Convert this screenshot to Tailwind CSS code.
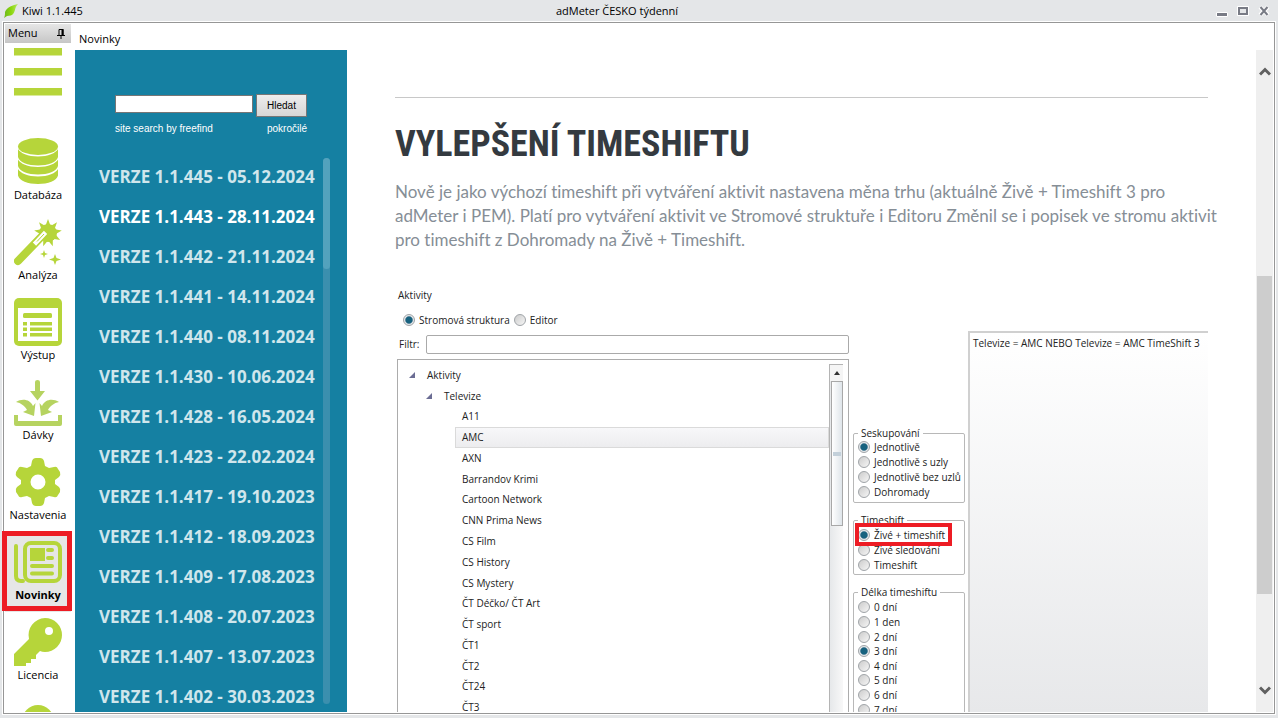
<!DOCTYPE html>
<html lang="cs">
<head>
<meta charset="utf-8">
<title>Kiwi 1.1.445</title>
<script src="https://cdn.jsdelivr.net/npm/@tailwindcss/browser@4"></script>
</head>
<body class="h-screen overflow-hidden bg-[#e4e6e8] text-black font-['Open_Sans',sans-serif] text-[11px] flex flex-col px-[3px] pb-1">
  <header class="h-[22px] shrink-0 grid grid-cols-[1fr_auto_1fr] items-center px-px">
    <div class="flex items-center gap-1">
      <svg class="w-3.5 h-4" viewBox="0 0 14 16"><defs><linearGradient id="leaf" x1="0" x2="1"><stop offset="0" stop-color="#6cb81e"/><stop offset=".5" stop-color="#8ad60c"/><stop offset="1" stop-color="#b4e860"/></linearGradient></defs><path d="M14 1C9 2 3 4 1 9c0 2 0 4-1 6l3-2c6 0 7-3 8-6 .4-2 1-4 3-6Z" fill="url(#leaf)"/></svg>
      <span>Kiwi 1.1.445</span>
    </div>
    <h1 class="pr-11">adMeter ČESKO týdenní</h1>
    <div class="flex justify-end items-center gap-[9px] pr-1">
      <button aria-label="Minimalizovat" class="w-3 h-3"><svg viewBox="0 0 12 12"><path d="M.5 7.5h11v4H.5z" fill="#787b85" stroke="#fff"/></svg></button>
      <button aria-label="Maximalizovat" class="w-3 h-3"><svg viewBox="0 0 12 12"><path d="M.5 1.500h11v9H.5z" fill="#fff" stroke="#fff"/><path d="M2 3h8v6H2z" fill="#e4e6e8" stroke="#787b85" stroke-width="2"/></svg></button>
      <button aria-label="Zavřít" class="w-3 h-3"><svg viewBox="0 0 12 12"><path d="M2 2l8 8M10 2l-8 8" stroke="#fff" stroke-width="4"/><path d="M2.500 2l7 8M9.500 2l-7 8" stroke="#787b85" stroke-width="2"/></svg></button>
    </div>
  </header>

  <main class="flex-1 min-h-0 flex bg-white border border-[#969696] outline outline-white p-px">
    <nav class="w-[70px] -ml-[3px] pl-[3px] -mr-px pr-px shrink-0 flex flex-col overflow-hidden" aria-label="Menu">
      <div class="h-[19px] shrink-0 flex items-center justify-between pl-[3px] pr-1.5 bg-linear-to-b from-[#e6e6e6] to-[#c6c6c6]">
        <span>Menu</span>
        <button aria-label="Připnout" class="w-2 h-2.5"><svg viewBox="0 0 8 10" fill="none" stroke="#000"><path d="M2 6V.5h4V6M0 6.500h8M4 7v3"/><path d="M5.500 0v6" stroke-width="2"/></svg></button>
      </div>
      <button aria-label="Menu" class="h-[89px] shrink-0 flex flex-col items-center pt-[5px]">
        <svg class="w-12 h-12" viewBox="0 0 48 48" fill="#b6d53a"><path d="M0 0h48v7.500H0zM0 20h48v7.500H0zM0 40h48v7.500H0z"/></svg>
      </button>
      <button class="h-20 shrink-0 flex flex-col items-center pt-1.5">
        <svg class="w-12 h-12" viewBox="0 0 48 48" fill="#b6d53a"><ellipse cx="24" cy="8.500" rx="20" ry="8.500"/><path d="M4 11c2 4 10 7.500 20 7.500S42 15 44 11v8c-1 5-10 8.500-20 8.500S5 24 4 19ZM4 21.500c2 4 10 7.500 20 7.500s18-3.500 20-7.500v6.500c-1 5-10 8.500-20 8.500S5 33 4 28ZM4 31c2 4 10 7.500 20 7.500s18-3.500 20-7.500v6.500c-1 5-10 8.500-20 8.500S5 42.500 4 37.500Z"/></svg>
        <span class="leading-[18px]">Databáza</span>
      </button>
      <button class="h-20 shrink-0 flex flex-col items-center pt-1.5">
        <svg class="w-12 h-12" viewBox="0 0 48 48" fill="#b6d53a"><circle cx="34" cy="15" r="9"/><path d="M34 1 36.600 8 43 4.300 40.500 11.300 47.800 12.600 41.400 16.300 46.100 22 38.800 20.700V28.200L34 22.500 29.200 28.200V20.700L21.900 22 26.600 16.300 20.200 12.600 27.500 11.300 25 4.300 31.400 8Z"/><path d="M4 43 31 15" stroke="#b6d53a" stroke-width="8" stroke-linecap="round"/><path d="m22 24.500 8-8.500" stroke="#fff" stroke-width="4.500" stroke-linecap="square"/><path d="m23 23.500 7-7.500" stroke="#b6d53a" stroke-width="1"/><path d="M30 32l1 3 3 1-3 1-1 3-1-3-3-1 3-1ZM41 36l1.500 4 4.500 1.500-4.500 1.500L41 47l-1.500-4-4.500-1.500 4.500-1.500Z"/></svg>
        <span class="leading-[18px]">Analýza</span>
      </button>
      <button class="h-20 shrink-0 flex flex-col items-center pt-1.5">
        <svg class="w-12 h-12" viewBox="0 0 48 48" fill="#b6d53a"><rect width="48" height="48" rx="5"/><path d="M4 10h40v33H4z" fill="#fff"/><rect x="9" y="15" width="29" height="5" rx="1.500"/><path d="M9 24h4v3.500H9zM16 24h22v3.500H16zM9 29.500h4v3.500H9zM16 29.500h22v3.500H16zM9 35h4v3.500H9zM16 35h22v3.500H16z"/></svg>
        <span class="leading-[18px]">Výstup</span>
      </button>
      <button class="h-20 shrink-0 flex flex-col items-center pt-1.5">
        <svg class="w-12 h-12" viewBox="0 0 48 48" fill="#b6d360"><path d="M21 4q0-2 2.500-2T26 4v9h5l-7.500 9.500L16 13h5ZM2 24c6-4 14-3 17 4l2.500-3-1.500 13-11-4 4-2c-2-4-6-7-11-8ZM45 24c-6-4-14-3-17 4l-2.500-3 1.500 13 11-4-4-2c2-4 6-7 11-8Z"/><path d="M0 37h4v6h40v-6h4v9q0 2-2 2H2q-2 0-2-2Z"/></svg>
        <span class="leading-[18px]">Dávky</span>
      </button>
      <button class="h-20 shrink-0 flex flex-col items-center pt-1.5">
        <svg class="w-12 h-12" viewBox="0 0 48 48"><path d="M18 3q1-3 4-3h4q3 0 4 3l1 5 4 2 5-1q3-1 4 2l2 3q1 3-1 5l-4 3v4l4 3q2 2 1 5l-2 3q-1 3-4 2l-5-1-4 2-1 5q-1 3-4 3h-4q-3 0-4-3l-1-5-4-2-5 1q-3 1-4-2l-2-3q-1-3 1-5l4-3v-4l-4-3q-2-2-1-5l2-3q1-3 4-2l5 1 4-2ZM24 16.500a7.500 7.500 0 1 0 0 15 7.500 7.500 0 0 0 0-15Z" fill="#b6d53a" fill-rule="evenodd"/></svg>
        <span class="leading-[18px]">Nastavenia</span>
      </button>
      <button class="h-20 shrink-0 flex flex-col items-center pt-1.5 bg-[#e6e6e6] relative" aria-current="page">
        <svg class="w-12 h-12" viewBox="0 0 48 48" fill="none" stroke="#b6d53a"><path d="M2 8v30q0 5 5 5h2" stroke-width="4" stroke-linecap="round"/><rect x="11" y="5" width="35" height="38" rx="6" stroke-width="4"/><path d="M18 12h11v9H18z" stroke-width="4" fill="#b6d53a"/><path d="M34 12h4M34 20h4M18 28h20M18 35.500h20" stroke-width="4" stroke-linecap="round"/></svg>
        <span class="leading-[18px] font-bold">Novinky</span>
        <span class="absolute -left-[3px] -right-px -top-px h-20 border-5 border-[#ed1c24]"></span>
      </button>
      <button class="h-20 shrink-0 flex flex-col items-center pt-1.5">
        <svg class="w-12 h-12" viewBox="0 0 48 48"><path d="M31 0a17 17 0 0 1 0 34q-3 0-5-1l-4 4v4h-5v4h-5v3H0V36l15-15A17 17 0 0 1 31 0Zm4 9a4 4 0 1 0 0 8 4 4 0 0 0 0-8Z" fill="#b6d53a" fill-rule="evenodd"/></svg>
        <span class="leading-[18px]">Licencia</span>
      </button>
      <button class="h-20 shrink-0 flex flex-col items-center pt-[13px]" aria-label="O programu">
        <svg class="w-8 h-8" viewBox="0 0 32 32"><circle cx="16" cy="16" r="16" fill="#b6d53a"/></svg>
      </button>
    </nav>

    <section class="flex-1 min-w-0 flex flex-col pl-1">
      <h2 class="h-[26px] shrink-0 pl-1 leading-[29px]">Novinky</h2>
      <div class="flex-1 min-h-0 flex">
        <aside class="w-68 shrink-0 bg-[#1580a2] flex flex-col overflow-hidden font-['Liberation_Sans',sans-serif] text-white">
          <form class="pl-10 pt-11 w-[232px] text-[10px]">
            <div class="flex items-start gap-[3px]">
              <input type="text" aria-label="Hledat na webu" class="w-[138px] h-[18px] mt-px bg-white border border-[#767676] text-black px-1">
              <button type="button" class="flex-1 h-[23px] border border-[#767676] bg-linear-to-b from-[#ededed] to-[#d6d6d6] text-black">Hledat</button>
            </div>
            <div class="flex justify-between leading-4 pt-1">
              <a href="#">site search by freefind</a><a href="#">pokročilé</a>
            </div>
          </form>
          <div class="flex pt-[21px] pl-6 pr-[17px] pb-2 justify-between flex-1 min-h-0">
            <ul class="-mt-px text-[17px] font-bold font-['Open_Sans',sans-serif] text-[#d0e6ec] leading-10 whitespace-nowrap">
              <li><a href="#">VERZE 1.1.445 - 05.12.2024</a></li>
              <li><a href="#" class="text-white">VERZE 1.1.443 - 28.11.2024</a></li>
              <li><a href="#">VERZE 1.1.442 - 21.11.2024</a></li>
              <li><a href="#">VERZE 1.1.441 - 14.11.2024</a></li>
              <li><a href="#">VERZE 1.1.440 - 08.11.2024</a></li>
              <li><a href="#">VERZE 1.1.430 - 10.06.2024</a></li>
              <li><a href="#">VERZE 1.1.428 - 16.05.2024</a></li>
              <li><a href="#">VERZE 1.1.423 - 22.02.2024</a></li>
              <li><a href="#">VERZE 1.1.417 - 19.10.2023</a></li>
              <li><a href="#">VERZE 1.1.412 - 18.09.2023</a></li>
              <li><a href="#">VERZE 1.1.409 - 17.08.2023</a></li>
              <li><a href="#">VERZE 1.1.408 - 20.07.2023</a></li>
              <li><a href="#">VERZE 1.1.407 - 13.07.2023</a></li>
              <li><a href="#">VERZE 1.1.402 - 30.03.2023</a></li>
            </ul>
            <div class="w-[7px] shrink-0 rounded-full bg-[#3b8fae]"><div class="h-[111px] rounded-full bg-[#53a2bd]"></div></div>
          </div>
        </aside>

        <article class="flex-1 min-w-0 px-12 overflow-hidden">
          <hr class="mt-[47px] border-[#c8c8c8]">
          <h3 class="mt-4 text-4xl/15 font-bold text-[#343a40] font-['Roboto_Condensed','Liberation_Sans_Narrow','Liberation_Sans',sans-serif] whitespace-nowrap">VYLEPŠENÍ TIMESHIFTU</h3>
          <p class="mt-[6px] -mr-4 text-[17px] leading-6 text-[#868e96] font-['Lato',sans-serif] [font-variant-ligatures:none]">Nově je jako výchozí timeshift při vytváření aktivit nastavena měna trhu (aktuálně Živě + Timeshift 3 pro adMeter i PEM). Platí pro vytváření aktivit ve Stromové struktuře i Editoru Změnil se i popisek ve stromu aktivit pro timeshift z Dohromady na Živě + Timeshift.</p>

          <div class="mt-7 flex gap-1 pl-0.5 text-[10px] text-[#222] h-[450px]">
            <div class="w-[452px] shrink-0 flex flex-col">
              <div class="h-[30px] leading-6 pt-[3px] pl-px">Aktivity</div>
              <div class="h-5 flex items-center gap-1 pl-1.5">
                <input id="m1" type="radio" name="mode" checked class="appearance-none w-3 h-3 rounded-full border border-[#a0a4a8] bg-[#eee] checked:bg-radial checked:from-[#17627f] checked:from-45% checked:to-[#e4e8ea] checked:to-60%">
                <label for="m1">Stromová struktura</label>
                <input id="m2" type="radio" name="mode" class="appearance-none w-3 h-3 rounded-full border border-[#a0a4a8] bg-linear-to-br from-[#ccc] to-[#f6f6f6]">
                <label for="m2">Editor</label>
              </div>
              <div class="h-[29px] flex items-center pl-0.5">
                <label for="filtr" class="w-[27px]">Filtr:</label>
                <input id="filtr" type="text" class="flex-1 h-[19px] border border-[#aaa] rounded-xs bg-white">
              </div>
              <div class="flex-1 border border-[#acacac] flex justify-between pt-1 pr-[5px]">
                <ul class="flex-1 h-[354px] flex flex-col pt-px">
                  <li class="flex-1 flex items-center pl-[11px] gap-3"><svg class="w-1.5 h-1.5" viewBox="0 0 6 6"><path d="M0 6h6V0z" fill="#6b6d94"/></svg>Aktivity</li>
                  <li class="flex-1 flex items-center pl-7 gap-3"><svg class="w-1.5 h-1.5" viewBox="0 0 6 6"><path d="M0 6h6V0z" fill="#6b6d94"/></svg>Televize</li>
                  <li class="flex-1 flex items-center ml-16">A11</li>
                  <li class="flex-1 flex items-center ml-[57px] pl-[7px] inset-ring inset-ring-[#dadada] bg-linear-to-b from-[#f8f8fa] to-[#ececee]">AMC</li>
                  <li class="flex-1 flex items-center ml-16">AXN</li>
                  <li class="flex-1 flex items-center ml-16">Barrandov Krimi</li>
                  <li class="flex-1 flex items-center ml-16">Cartoon Network</li>
                  <li class="flex-1 flex items-center ml-16">CNN Prima News</li>
                  <li class="flex-1 flex items-center ml-16">CS Film</li>
                  <li class="flex-1 flex items-center ml-16">CS History</li>
                  <li class="flex-1 flex items-center ml-16">CS Mystery</li>
                  <li class="flex-1 flex items-center ml-16">ČT Déčko/ ČT Art</li>
                  <li class="flex-1 flex items-center ml-16">ČT sport</li>
                  <li class="flex-1 flex items-center ml-16">ČT1</li>
                  <li class="flex-1 flex items-center ml-16">ČT2</li>
                  <li class="flex-1 flex items-center ml-16">ČT24</li>
                  <li class="flex-1 flex items-center ml-16">ČT3</li>
                </ul>
                <div class="w-3.5 border-l border-t border-[#b4b4b4] bg-linear-to-r from-[#e6e8ea] to-[#f8f8f8]">
                  <button aria-label="Nahoru" class="w-full h-4 bg-[#f5f5f5] flex items-center justify-center"><svg class="w-1.5 h-1" viewBox="0 0 6 4"><path d="M0 4h6L3 0z" fill="#333"/></svg></button>
                  <div class="h-[145px] ml-px border border-[#a8a8a8] bg-linear-to-r from-white to-[#dfe5ea] flex flex-col justify-center px-px"><div class="h-1 bg-[#c3d0da]"></div></div>
                </div>
              </div>
            </div>

            <div class="w-28 shrink-0 pt-[146px] leading-[14px] flex flex-col whitespace-nowrap">
              <fieldset class="h-[77px] border border-[#b8b8b8] rounded-xs pl-1">
                <legend class="px-[3px]">Seskupování</legend>
                <div class="h-[59px] flex flex-col [&>label]:flex-1 [&>label]:flex [&>label]:items-center [&>label]:gap-1 [&_input]:appearance-none [&_input]:w-3 [&_input]:h-3 [&_input]:rounded-full [&_input]:border [&_input]:border-[#a0a4a8] [&_input]:bg-linear-to-br [&_input]:from-[#ccc] [&_input]:to-[#f6f6f6] [&_input:checked]:bg-radial [&_input:checked]:from-[#17627f] [&_input:checked]:from-45% [&_input:checked]:to-[#e4e8ea] [&_input:checked]:to-60%">
                  <label><input type="radio" name="grp" checked>Jednotlivě</label>
                  <label><input type="radio" name="grp">Jednotlivě s uzly</label>
                  <label><input type="radio" name="grp">Jednotlivě bez uzlů</label>
                  <label><input type="radio" name="grp">Dohromady</label>
                </div>
              </fieldset>
              <fieldset class="mt-2.5 h-[62px] border border-[#b8b8b8] rounded-xs pl-1 relative">
                <legend class="px-[3px]">Timeshift</legend>
                <div class="h-11 mt-px flex flex-col [&>label]:flex-1 [&>label]:flex [&>label]:items-center [&>label]:gap-1 [&_input]:appearance-none [&_input]:w-3 [&_input]:h-3 [&_input]:rounded-full [&_input]:border [&_input]:border-[#a0a4a8] [&_input]:bg-linear-to-br [&_input]:from-[#ccc] [&_input]:to-[#f6f6f6] [&_input:checked]:bg-radial [&_input:checked]:from-[#17627f] [&_input:checked]:from-45% [&_input:checked]:to-[#e4e8ea] [&_input:checked]:to-60%">
                  <label><input type="radio" name="ts" checked>Živé + timeshift</label>
                  <label><input type="radio" name="ts">Živé sledování</label>
                  <label><input type="radio" name="ts">Timeshift</label>
                </div>
                <div class="absolute left-px -top-1 w-[97px] h-[23px] border-4 border-[#ed1c24]"></div>
              </fieldset>
              <fieldset class="mt-2.5 flex-1 border border-[#b8b8b8] rounded-xs pl-1">
                <legend class="px-[3px]">Délka timeshiftu</legend>
                <div class="h-[117px] mt-px flex flex-col [&>label]:flex-1 [&>label]:flex [&>label]:items-center [&>label]:gap-1 [&_input]:appearance-none [&_input]:w-3 [&_input]:h-3 [&_input]:rounded-full [&_input]:border [&_input]:border-[#a0a4a8] [&_input]:bg-linear-to-br [&_input]:from-[#ccc] [&_input]:to-[#f6f6f6] [&_input:checked]:bg-radial [&_input:checked]:from-[#17627f] [&_input:checked]:from-45% [&_input:checked]:to-[#e4e8ea] [&_input:checked]:to-60%">
                  <label><input type="radio" name="len">0 dní</label>
                  <label><input type="radio" name="len">1 den</label>
                  <label><input type="radio" name="len">2 dní</label>
                  <label><input type="radio" name="len" checked>3 dní</label>
                  <label><input type="radio" name="len">4 dní</label>
                  <label><input type="radio" name="len">5 dní</label>
                  <label><input type="radio" name="len">6 dní</label>
                  <label><input type="radio" name="len">7 dní</label>
                </div>
              </fieldset>
            </div>

            <div class="flex-1 min-w-0 -ml-px mt-[51px] border-l-2 border-t-2 border-[#d0d0d0] bg-linear-to-b from-white to-[#e6e7e9] pl-[3px] pt-0.5 leading-4 whitespace-nowrap overflow-hidden">Televize = AMC NEBO Televize = AMC TimeShift 3</div>
          </div>
        </article>

        <div class="w-[17px] shrink-0 bg-[#efefef] flex flex-col items-center px-px">
          <button aria-label="Posunout nahoru" class="h-[42px]"><svg class="w-3 h-3" viewBox="0 0 12 12" fill="none" stroke="#606060" stroke-width="3"><path d="m1 9.500 5-5 5 5"/></svg></button>
          <div class="mt-46 w-full h-[318px] bg-[#cdcdcd]"></div>
          <div class="flex-1"></div>
          <button aria-label="Posunout dolů" class="h-[42px]"><svg class="w-3 h-3" viewBox="0 0 12 12" fill="none" stroke="#606060" stroke-width="3"><path d="m1 2.500 5 5 5-5"/></svg></button>
        </div>
      </div>
    </section>
  </main>
</body>
</html>
